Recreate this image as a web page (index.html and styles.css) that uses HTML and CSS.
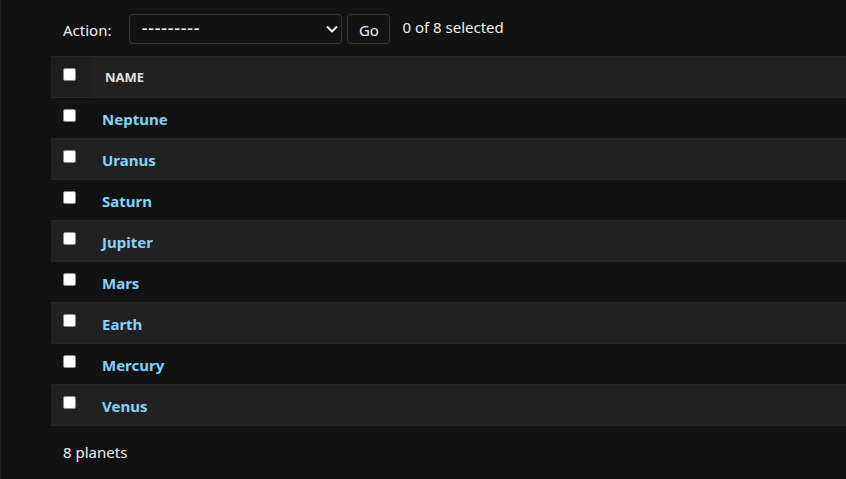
FILE: index.html
```html
<!DOCTYPE html>
<html>
<head>
<meta charset="utf-8">
<link rel="stylesheet" href="styles.css">
</head>
<body>
<div class="page">
  <div class="actions">
    <label class="action-label">Action:</label>
    <div class="select">
      <span class="select-value">---------</span>
      <svg class="chev" width="14" height="14" viewBox="0 0 14 14"><path d="M2.5 5 L7 9.5 L11.5 5" fill="none" stroke="#eeeeee" stroke-width="2" stroke-linecap="round" stroke-linejoin="round"/></svg>
    </div>
    <button class="go">Go</button>
    <span class="counter">0 of 8 selected</span>
  </div>
  <table class="results">
    <thead>
      <tr><th class="cb-col"><span class="cb"></span></th><th class="name-col">NAME</th></tr>
    </thead>
    <tbody>
      <tr class="row1"><td class="cb-col"><span class="cb"></span></td><th><a>Neptune</a></th></tr>
      <tr class="row2"><td class="cb-col"><span class="cb"></span></td><th><a>Uranus</a></th></tr>
      <tr class="row1"><td class="cb-col"><span class="cb"></span></td><th><a>Saturn</a></th></tr>
      <tr class="row2"><td class="cb-col"><span class="cb"></span></td><th><a>Jupiter</a></th></tr>
      <tr class="row1"><td class="cb-col"><span class="cb"></span></td><th><a>Mars</a></th></tr>
      <tr class="row2"><td class="cb-col"><span class="cb"></span></td><th><a>Earth</a></th></tr>
      <tr class="row1"><td class="cb-col"><span class="cb"></span></td><th><a>Mercury</a></th></tr>
      <tr class="row2"><td class="cb-col"><span class="cb"></span></td><th><a>Venus</a></th></tr>
    </tbody>
  </table>
  <p class="paginator">8 planets</p>
</div>
</body>
</html>
```
FILE: styles.css
```css
html, body {
  margin: 0;
  padding: 0;
  background: #121212;
  height: 100%;
}
body {
  font-family: "Noto Sans", "Open Sans", sans-serif;
  color: #eeeeee;
  border-left: 1px solid #1c1c1c;
  box-sizing: border-box;
  overflow: hidden;
}
.page {
  padding-left: 50px;
}
.actions {
  display: flex;
  align-items: center;
  height: 56px;
  padding-left: 12px;
  font-size: 15px;
  color: #eeeeee;
}
.action-label {
  margin-right: 18px;
  margin-top: 4px;
}
.select {
  box-sizing: border-box;
  width: 213px;
  height: 30px;
  border: 1px solid #353535;
  border-radius: 4px;
  display: flex;
  align-items: center;
  justify-content: space-between;
  padding: 0 2px 0 11px;
  margin-top: 1px;
}
.select-value {
  font-size: 19px;
  line-height: 1;
  letter-spacing: 0.4px;
  margin-top: 0;
}
.go {
  box-sizing: border-box;
  height: 30px;
  width: 43px;
  margin-left: 5px;
  border: 1px solid #353535;
  border-radius: 4px;
  background: #121212;
  color: #eeeeee;
  font-family: inherit;
  font-size: 15px;
  padding: 2px 0 0;
  margin-top: 1px;
}
.counter {
  margin-left: 12px;
  margin-top: -3px;
}
.results {
  border-collapse: collapse;
  width: 100%;
}
.results th, .results td {
  padding: 0;
  text-align: left;
  border-bottom: 1px solid #272727;
  vertical-align: middle;
}
thead th {
  background: #212121;
  border-top: 1px solid #272727;
  height: 40px;
}
thead th.cb-col {
  background: #1e1e1e;
}
.name-col {
  font-size: 13px;
  font-weight: 700;
  color: #e0e0e0;
  padding-left: 13px !important;
}
.cb-col {
  width: 29px;
  padding-left: 12px !important;
}
.cb {
  display: block;
  width: 11px;
  height: 11px;
  background: #ffffff;
  border: 1px solid #8a8a8a;
  border-radius: 2px;
  margin-top: -5px;
}
tbody td {
  height: 40px;
}
.row1 { background: #121212; }
.row2 { background: #212121; }
tbody th {
  height: 38px;
  padding-left: 10px !important;
  padding-top: 2px !important;
}
tbody a {
  color: #81d4fa;
  font-weight: 700;
  font-size: 15px;
}
.paginator {
  margin: 0;
  padding: 16px 0 0 12px;
  font-size: 15px;
  color: #eeeeee;
}
```
